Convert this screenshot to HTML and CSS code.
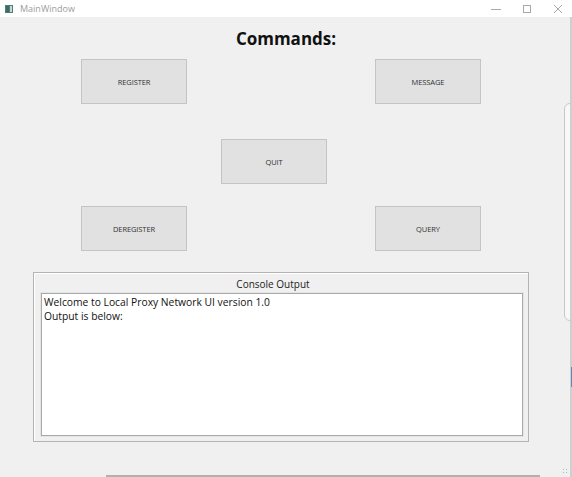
FILE: index.html
```html
<!DOCTYPE html>
<html>
<head>
<meta charset="utf-8">
<link rel="stylesheet" href="styles.css">
</head>
<body>
<div class="window">
  <div class="titlebar">
    <div class="app">
      <svg class="appicon" width="8" height="8" viewBox="0 0 8 8"><rect x="0" y="0" width="8" height="8" fill="#4f7f7a"/><rect x="5" y="1" width="2" height="6" fill="#c9d6d4"/><rect x="1" y="1" width="3" height="6" fill="#3d6a66"/></svg>
      <span class="apptitle">MainWindow</span>
    </div>
    <div class="controls">
      <svg width="10" height="10" viewBox="0 0 10 10"><line x1="0" y1="5.5" x2="10" y2="5.5" stroke="#a8a8a8" stroke-width="1"/></svg>
      <svg width="10" height="10" viewBox="0 0 10 10"><rect x="1.5" y="1.5" width="7" height="7" fill="none" stroke="#a8a8a8" stroke-width="1"/></svg>
      <svg width="10" height="10" viewBox="0 0 10 10"><path d="M1 1 L9 9 M9 1 L1 9" stroke="#a8a8a8" stroke-width="1"/></svg>
    </div>
  </div>
  <div class="content">
    <h1 class="heading">Commands:</h1>
    <div class="buttons">
      <div class="btn b-register">REGISTER</div>
      <div class="btn b-message">MESSAGE</div>
      <div class="btn b-quit">QUIT</div>
      <div class="btn b-deregister">DEREGISTER</div>
      <div class="btn b-query">QUERY</div>
    </div>
    <div class="group">
      <div class="group-title">Console Output</div>
      <div class="console"><div class="line">Welcome to Local Proxy Network UI version 1.0</div><div class="line">Output is below:</div></div>
    </div>
  </div>
  <div class="side-panel"></div>
  <div class="edge-line"></div>
  <div class="edge-blue"></div>
  <div class="bottom-line"></div>
  <div class="grip"></div>
</div>
</body>
</html>
```
FILE: styles.css
```css
* { box-sizing: border-box; }
html, body { margin: 0; padding: 0; }
body {
  width: 572px;
  height: 477px;
  overflow: hidden;
  background: #f0f0f0;
  font-family: "Open Sans", "Noto Sans", sans-serif;
}
.window {
  position: relative;
  width: 572px;
  height: 477px;
  background: #f0f0f0;
}
.titlebar {
  height: 17px;
  background: #ffffff;
  display: flex;
  align-items: center;
  justify-content: space-between;
}
.app {
  display: flex;
  align-items: center;
  padding-left: 5px;
  gap: 7px;
}
.appicon { display: block; }
.apptitle {
  font-size: 9px;
  color: #9c9c9c;
  line-height: 17px;
}
.controls {
  display: flex;
  align-items: center;
  gap: 21px;
  padding-right: 9px;
}
.controls svg { display: block; }
.content {
  display: flex;
  flex-direction: column;
}
.heading {
  margin: 10px 0 0 0;
  height: 24px;
  font-size: 17px;
  line-height: 24px;
  font-weight: 700;
  text-align: center;
  color: #111;
}
.buttons {
  margin-top: 8px;
  padding-left: 81px;
  display: grid;
  grid-template-columns: 106px 34px 106px 48px 106px;
  grid-template-rows: 45px 35px 45px 22px 45px;
}
.btn {
  background: #e1e1e1;
  border: 1px solid #c4c4c4;
  display: flex;
  align-items: center;
  justify-content: center;
  font-size: 7.5px;
  color: #333;
  letter-spacing: -0.1px;
}
.b-register { grid-column: 1; grid-row: 1; }
.b-message { grid-column: 5; grid-row: 1; }
.b-quit { grid-column: 3; grid-row: 3; }
.b-deregister { grid-column: 1; grid-row: 5; }
.b-query { grid-column: 5; grid-row: 5; }
.group {
  margin: 21px 0 0 33px;
  width: 496px;
  height: 170px;
  border: 1px solid #b4b4b4;
  box-shadow: inset 1px 1px 0 #ffffff;
  padding: 0 5px 5px 7px;
  display: flex;
  flex-direction: column;
}
.group-title {
  height: 20px;
  font-size: 10px;
  line-height: 20px;
  text-align: center;
  color: #222;
  padding-top: 1px;
  padding-right: 18px;
}
.console {
  flex: 1;
  background: #ffffff;
  border: 1px solid #a9a9a9;
  box-shadow: 0 0 0 1px #e4e4e4;
  padding: 1px 2px;
  font-size: 10.3px;
  line-height: 14px;
  color: #111;
}
.side-panel {
  position: absolute;
  left: 564px;
  top: 103px;
  width: 20px;
  height: 218px;
  border: 1px solid #c8c8c8;
  border-radius: 6px;
  background: #f8f8f8;
}
.edge-line {
  position: absolute;
  left: 570px;
  top: 17px;
  width: 2px;
  height: 460px;
  background: #cfcfcf;
}
.edge-blue {
  position: absolute;
  left: 571px;
  top: 367px;
  width: 1px;
  height: 20px;
  background: #5a8db0;
}
.bottom-line {
  position: absolute;
  left: 106px;
  top: 475px;
  width: 434px;
  height: 2px;
  background: #b0b0b0;
}
.grip {
  position: absolute;
  left: 562px;
  top: 468px;
  width: 6px;
  height: 6px;
  background-image: radial-gradient(circle, #b5b5b5 0.8px, transparent 1px);
  background-size: 3px 3px;
}
```
